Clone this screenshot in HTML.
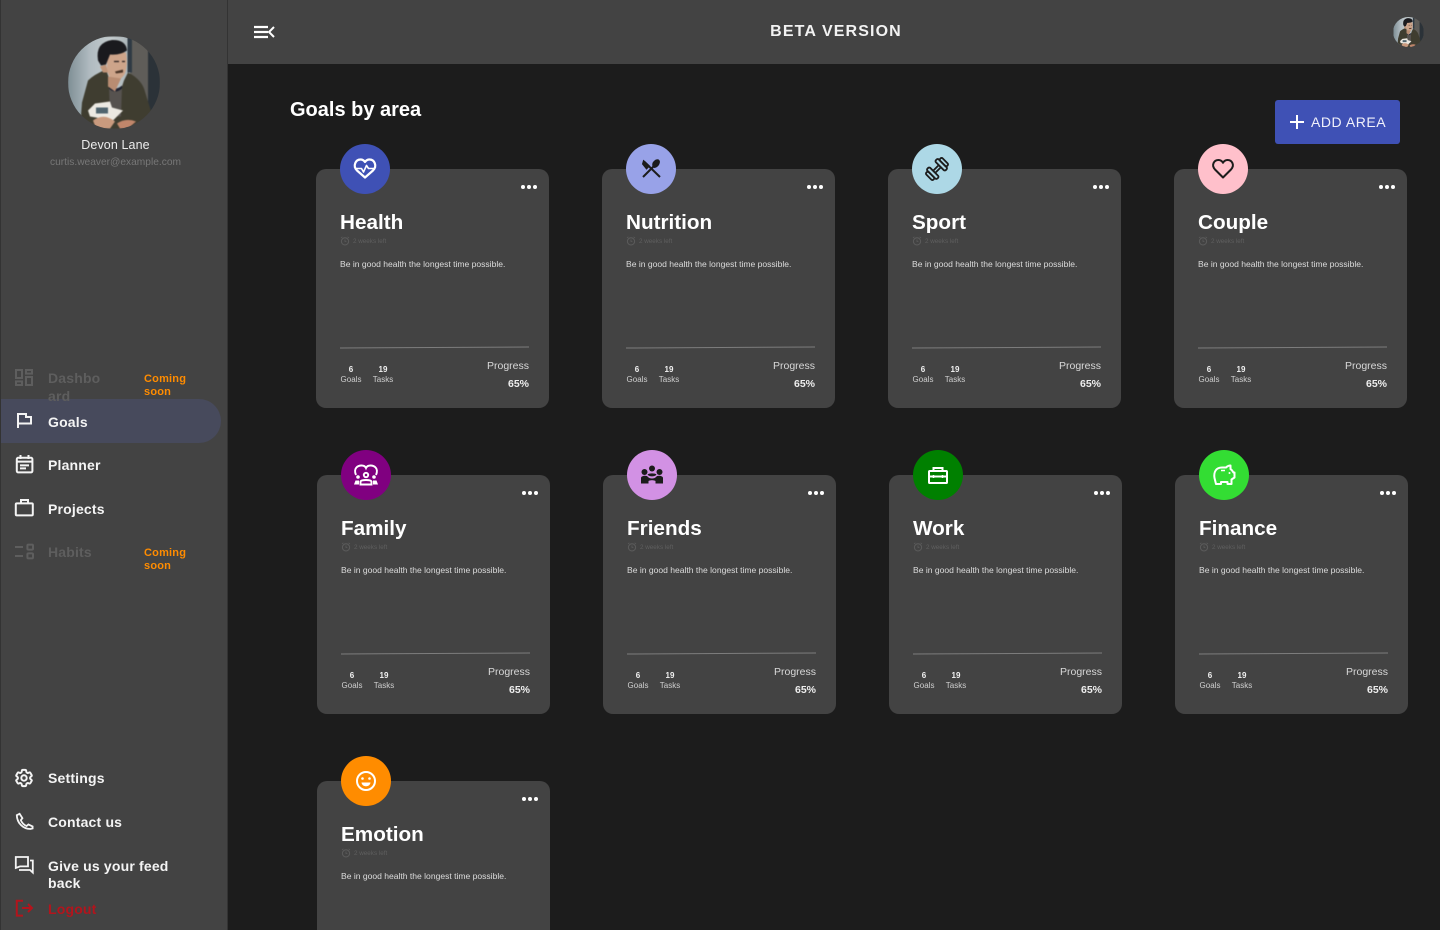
<!DOCTYPE html>
<html lang="en">
<head>
<meta charset="utf-8">
<title>Goals by area</title>
<style>
html,body{margin:0;padding:0;width:1440px;height:930px;overflow:hidden;background:#1c1c1c;font-family:"Liberation Sans",sans-serif;color:#fff}
*{box-sizing:border-box}
#root{position:relative;width:1440px;height:930px;overflow:hidden;background:#1c1c1c}
.a{position:absolute;white-space:nowrap}
#side{position:absolute;left:0;top:0;width:228px;height:930px;background:#434343;border-left:1px solid #333;border-right:1px solid #333;overflow:hidden}
#side svg.ov{position:absolute;left:-1px;top:0}
#top{position:absolute;left:228px;top:0;width:1212px;height:64px;background:#434343}
.n{position:absolute;left:47px;font-size:14px;font-weight:bold;line-height:17px;letter-spacing:.18px;color:#f4f4f4;white-space:nowrap}
.off{color:#5e5e5e}
.cs{position:absolute;left:143px;font-size:11px;font-weight:bold;line-height:13.5px;color:#ff8c00;letter-spacing:.2px}
.c{position:absolute;width:233px;height:239px;background:#434343;border-radius:10px}
.i{position:absolute;left:24px;top:-25px;width:50px;height:50px;border-radius:50%}
.i svg{display:block}
.d{position:absolute;top:15.7px;width:4.6px;height:4.6px;border-radius:50%;background:#fff}
.t{position:absolute;left:24px;top:41.5px;font-size:20.7px;font-weight:bold;line-height:24px;white-space:nowrap;color:#fff}
.ck{position:absolute;left:24px;top:67px}
.w{position:absolute;left:37px;top:69px;font-size:6.3px;line-height:8px;color:#5f5f5f;white-space:nowrap}
.p{position:absolute;left:24px;top:90px;font-size:8.56px;line-height:11px;color:#dcdcdc;white-space:nowrap}
.l{position:absolute;left:24px;top:177.5px;width:189px;height:1px;background:#7d7d7d;transform:rotate(-.3deg)}
.s{position:absolute;top:196px;width:40px;text-align:center;font-size:8px;line-height:10px;font-weight:bold;color:#f2f2f2}
.s2{position:absolute;top:206px;width:40px;text-align:center;font-size:8px;line-height:10px;color:#cfcfcf}
.pr{position:absolute;right:20px;top:190px;font-size:10.5px;line-height:14px;color:#d8d8d8}
.pc{position:absolute;right:20px;top:208px;font-size:10.5px;line-height:14px;font-weight:bold;color:#eee}
.blur{filter:blur(.5px)}
</style>
</head>
<body>
<div id="root">
<svg width="0" height="0" style="position:absolute">
<defs>
<linearGradient id="g" x1="0" x2="1"><stop offset="0" stop-color="#7f8f96"/><stop offset=".35" stop-color="#b0bbc0"/><stop offset=".7" stop-color="#c4ccce"/><stop offset="1" stop-color="#a8b2b6"/></linearGradient>
<symbol id="av" viewBox="0 0 92 92">
<rect width="62" height="92" fill="url(#g)"/>
<rect x="62" width="30" height="92" fill="#5f5d59"/>
<rect x="59.5" width="4.5" height="36" fill="#2f3a44"/>
<rect x="80" width="12" height="92" fill="#2b3238"/>
<path d="M12 92 L14 66 L20 44 Q26 38 38 33 L44 50 L50 62 L56 44 L60 36 Q72 42 76 52 L84 78 L80 92Z" fill="#3f3d30"/>
<path d="M41 50 Q47 56 54 50 L53 80 L42 80Z" fill="#56524f"/>
<path d="M41 49 Q47 55 54 49 L54 52 Q47 58 41 52Z" fill="#1f2230"/>
<path d="M39 16 L58 16 Q60 28 57 37 Q53 44 47 44 Q40 42 39 32Z" fill="#cda48a"/>
<path d="M40 40 L40 50 L47 55 L53 42Z" fill="#b88c72"/>
<path d="M32 30 L38 28 L40 36 L35 36Z" fill="#c09478"/>
<path d="M30 24 Q27 6 44 3.5 Q58 3 59 14 Q52 19 42 18 L38 28 L33 29Z" fill="#1a1a1e"/>
<path d="M47 35 L55 33 L55 36 L48 37Z" fill="#4b3528"/>
<path d="M46 25H51M54 25H57" stroke="#2a2020" stroke-width="1.2"/>
<path d="M20 74 L27 67 L42 65 L44 71 L55 74 L44 85 L28 81 L22 80Z" fill="#ece9e2"/>
<rect x="28" y="71" width="12" height="6" fill="#50646e"/>
<path d="M25 84 Q36 76 47 85 L42 92 L28 92Z" fill="#c99a7e"/>
<path d="M49 87 Q58 81 68 85 L60 92 L52 92Z" fill="#c0866b"/>
</symbol>
<symbol id="clock" viewBox="0 0 10 10"><circle cx="5" cy="5.4" r="3.6" fill="none" stroke="#5c5c5c" stroke-width="1"/><path d="M5 3.5V5.5H6.4M1 2L2.4 .8M9 2L7.6 .8" fill="none" stroke="#5c5c5c" stroke-width=".8"/></symbol>
</defs>
</svg>

<div id="side">
<svg class="ov" width="228" height="930" viewBox="0 0 228 930" fill="none">
<path d="M0 399H199a22 22 0 0 1 0 44H0Z" fill="#474a5c"/>
<g stroke="#5e5e5e" stroke-width="2">
<rect x="16" y="370" width="6" height="8"/><rect x="26" y="370" width="6" height="3.6"/><rect x="16" y="381.4" width="6" height="3.6"/><rect x="26" y="377" width="6" height="8"/>
<path d="M15 547H23M15 556H23"/><rect x="27.4" y="544.6" width="5.6" height="5" rx="1"/><rect x="27.4" y="553.4" width="5.6" height="5" rx="1"/>
</g>
<g stroke="#f4f4f4" stroke-width="2">
<path d="M18 428V414H26V417H31V423.5H18"/>
<rect x="16.8" y="457.8" width="15.6" height="14.6" rx="1.4"/><path d="M20.5 455V459M28.5 455V459M17 461.6H32M20 465.4H29M20 468.4H26"/>
<rect x="15.8" y="503.4" width="17" height="12" rx="1"/><path d="M21 503V500H28V503"/>
<g transform="translate(13.2 767.2) scale(.9)" stroke-width="2.2"><path d="M9.594 3.94c.09-.542.56-.94 1.11-.94h2.593c.55 0 1.02.398 1.11.94l.213 1.281c.063.374.313.686.645.87.074.04.147.083.22.127.324.196.72.257 1.075.124l1.217-.456a1.125 1.125 0 011.37.49l1.296 2.247a1.125 1.125 0 01-.26 1.431l-1.003.827c-.293.24-.438.613-.431.992a6.759 6.759 0 010 .255c-.007.378.138.75.43.99l1.005.828c.424.35.534.954.26 1.43l-1.298 2.247a1.125 1.125 0 01-1.369.491l-1.217-.456c-.355-.133-.75-.072-1.076.124a6.57 6.57 0 01-.22.128c-.331.183-.581.495-.644.869l-.213 1.28c-.09.543-.56.941-1.11.941h-2.594c-.55 0-1.02-.398-1.11-.94l-.213-1.281c-.062-.374-.312-.686-.644-.87a6.52 6.52 0 01-.22-.127c-.325-.196-.72-.257-1.076-.124l-1.217.456a1.125 1.125 0 01-1.369-.49l-1.297-2.247a1.125 1.125 0 01.26-1.431l1.004-.827c.292-.24.437-.613.43-.992a6.932 6.932 0 010-.255c.007-.378-.138-.75-.43-.99l-1.004-.828a1.125 1.125 0 01-.26-1.43l1.297-2.247a1.125 1.125 0 011.37-.491l1.216.456c.356.133.751.072 1.076-.124.072-.044.146-.087.22-.128.332-.183.582-.495.644-.869l.214-1.281z"/><circle cx="12" cy="12" r="3"/></g>
<path d="M16.8 815.2L19.6 813.8L22.4 818.2L20.8 820.2C22 823 24 825 26.6 826L28.4 824.4L32.6 826.4V828.4L30.4 829C23 829 17 823 16.8 815.2Z" stroke-width="1.8"/>
<path d="M15.8 857H28V866.4H20L15.8 868Z" stroke-width="1.8"/><path d="M19 870H30L32.8 872.6V860.5H30" stroke-width="1.8"/>
</g>
<g stroke="#b3141c" stroke-width="2"><path d="M23 900.8H16.8V915.6H23M22 908H32M28 904L32 908L28 912"/></g>
</svg>
<div class="a" style="left:66.5px;top:35.5px;width:92px;height:93px;border-radius:50%;overflow:hidden"><svg class="blur" width="92" height="93" style="display:block"><use href="#av" width="92" height="93"/></svg></div>
<div class="a" style="left:0;width:229px;text-align:center;top:137px;font-size:12.5px;line-height:16px;color:#ececec;letter-spacing:.1px">Devon Lane</div>
<div class="a" style="left:0;width:229px;text-align:center;top:155.5px;font-size:10.2px;line-height:14px;color:#777">curtis.weaver@example.com</div>
<div class="n off" style="top:370px;white-space:normal;width:60px;line-height:17.5px;overflow:hidden;height:34px;word-break:break-all">Dashboard</div>
<div class="cs" style="top:372.5px">Coming<br>soon</div>
<div class="n" style="top:413.5px">Goals</div>
<div class="n" style="top:457px">Planner</div>
<div class="n" style="top:500.5px">Projects</div>
<div class="n off" style="top:544px">Habits</div>
<div class="cs" style="top:546.5px">Coming<br>soon</div>
<div class="n" style="top:770px">Settings</div>
<div class="n" style="top:813.5px">Contact us</div>
<div class="n" style="top:857.5px">Give us your feed<br>back</div>
<div class="n" style="top:900.5px;color:#b3141c">Logout</div>
</div>

<div id="top">
<svg class="a" style="left:0;top:0" width="60" height="64" fill="none" stroke="#fff" stroke-width="2.2"><path d="M26 27H40M26 32H40M26 37H40"/><path d="M46 27L41 32L46 37" stroke-width="2"/></svg>
<div class="a" style="left:0;width:1216px;text-align:center;top:22px;font-size:16px;line-height:20px;font-weight:bold;letter-spacing:1.12px;color:#f2f2f2">BETA VERSION</div>
<div class="a" style="left:1164.5px;top:17px;width:31px;height:30px;border-radius:50%;overflow:hidden"><svg width="31" height="30" style="display:block"><use href="#av" width="31" height="30"/></svg></div>
</div>

<div class="a" style="left:290px;top:97.5px;font-size:20px;line-height:24px;font-weight:bold;color:#fff">Goals by area</div>
<div class="a" style="left:1275px;top:100px;width:125px;height:44px;background:#3f51b5;border-radius:3px">
<svg class="a" style="left:15px;top:15px" width="14" height="14" fill="none" stroke="#fff" stroke-width="2"><path d="M7 0V14M0 7H14"/></svg>
<div class="a" style="left:36px;top:13px;font-size:14px;line-height:18px;letter-spacing:.55px;color:#f1f1fb">ADD AREA</div>
</div>

<!-- Health -->
<div class="c" style="left:316px;top:169px">
<div class="i" style="background:#3f51b5"><svg width="50" height="50" fill="none" stroke="#fff" stroke-width="2.2" stroke-linejoin="round"><path d="M25 33.5L17 26.5C12.5 22 15.5 15.5 20.5 15.5C22.5 15.5 24 16.5 25 18C26 16.5 27.5 15.5 29.5 15.5C34.5 15.5 37.5 22 33 26.5Z"/><path d="M15.5 24.5H21.5L23.5 28L26.5 21.5L28.5 24.5H34.5" stroke-width="1.6"/></svg></div>
<div class="d" style="left:204.5px"></div><div class="d" style="left:210.5px"></div><div class="d" style="left:216.5px"></div>
<div class="t">Health</div>
<svg class="ck" width="10" height="10"><use href="#clock"/></svg><div class="w">2 weeks left</div>
<div class="p">Be in good health the longest time possible.</div>
<div class="l"></div>
<div class="s" style="left:15px">6</div><div class="s2" style="left:15px">Goals</div>
<div class="s" style="left:47px">19</div><div class="s2" style="left:47px">Tasks</div>
<div class="pr">Progress</div><div class="pc">65%</div>
</div>

<!-- Nutrition -->
<div class="c" style="left:602px;top:169px">
<div class="i" style="background:#98a2e8"><svg width="50" height="50" fill="none" stroke="#1c1c1c" stroke-width="2"><path d="M34 33L18 17.5"/><path d="M17.5 16.5L23.5 22L20.5 25L16.5 20Z" fill="#1c1c1c" stroke-width="1"/><path d="M17 33L28 22"/><path d="M27 22.5C25.5 18.5 30 15 32.5 16C34.5 17.5 33 22.5 28.5 23.5Z" fill="#1c1c1c" stroke-width="1"/></svg></div>
<div class="d" style="left:204.5px"></div><div class="d" style="left:210.5px"></div><div class="d" style="left:216.5px"></div>
<div class="t">Nutrition</div>
<svg class="ck" width="10" height="10"><use href="#clock"/></svg><div class="w">2 weeks left</div>
<div class="p">Be in good health the longest time possible.</div>
<div class="l"></div>
<div class="s" style="left:15px">6</div><div class="s2" style="left:15px">Goals</div>
<div class="s" style="left:47px">19</div><div class="s2" style="left:47px">Tasks</div>
<div class="pr">Progress</div><div class="pc">65%</div>
</div>

<!-- Sport -->
<div class="c" style="left:888px;top:169px">
<div class="i" style="background:#add8e6"><svg width="50" height="50" fill="none" stroke="#1c1c1c" stroke-width="1.8"><g transform="rotate(-45 25 25)"><rect x="13.5" y="20" width="3.5" height="10" rx="1.5"/><rect x="17" y="18" width="4" height="14" rx="1.5"/><rect x="29" y="18" width="4" height="14" rx="1.5"/><rect x="33" y="20" width="3.5" height="10" rx="1.5"/><path d="M21 23.5H29M21 26.5H29"/></g></svg></div>
<div class="d" style="left:204.5px"></div><div class="d" style="left:210.5px"></div><div class="d" style="left:216.5px"></div>
<div class="t">Sport</div>
<svg class="ck" width="10" height="10"><use href="#clock"/></svg><div class="w">2 weeks left</div>
<div class="p">Be in good health the longest time possible.</div>
<div class="l"></div>
<div class="s" style="left:15px">6</div><div class="s2" style="left:15px">Goals</div>
<div class="s" style="left:47px">19</div><div class="s2" style="left:47px">Tasks</div>
<div class="pr">Progress</div><div class="pc">65%</div>
</div>

<!-- Couple -->
<div class="c" style="left:1174px;top:169px">
<div class="i" style="background:#ffc0cb"><svg width="50" height="50" fill="none" stroke="#1c1c1c" stroke-width="2" stroke-linejoin="round"><path d="M25 33.5L17 25.5C13 21 16 16 20.5 16C22.5 16 24 17 25 18.8C26 17 27.5 16 29.5 16C34 16 37 21 33 25.5Z"/></svg></div>
<div class="d" style="left:204.5px"></div><div class="d" style="left:210.5px"></div><div class="d" style="left:216.5px"></div>
<div class="t">Couple</div>
<svg class="ck" width="10" height="10"><use href="#clock"/></svg><div class="w">2 weeks left</div>
<div class="p">Be in good health the longest time possible.</div>
<div class="l"></div>
<div class="s" style="left:15px">6</div><div class="s2" style="left:15px">Goals</div>
<div class="s" style="left:47px">19</div><div class="s2" style="left:47px">Tasks</div>
<div class="pr">Progress</div><div class="pc">65%</div>
</div>

<!-- Family -->
<div class="c" style="left:317px;top:475px">
<div class="i" style="background:#800080"><svg width="50" height="50" fill="none" stroke="#fff" stroke-width="1.9"><path d="M15 25C12 18 17 15.5 20.5 15.5C23 15.5 24.5 16.8 25 18C25.5 16.8 27 15.5 29.5 15.5C33 15.5 38 18 35 25"/><circle cx="25" cy="25" r="2.2"/><circle cx="17" cy="27" r="1.8" fill="#fff" stroke="none"/><circle cx="33" cy="27" r="1.8" fill="#fff" stroke="none"/><path d="M19.5 34.5V31.5C20.5 29.5 29.5 29.5 30.5 31.5V34.5Z"/><path d="M13 34.5L14.5 30.5H18V34.5ZM37 34.5L35.5 30.5H32V34.5Z" fill="#fff" stroke="none"/></svg></div>
<div class="d" style="left:204.5px"></div><div class="d" style="left:210.5px"></div><div class="d" style="left:216.5px"></div>
<div class="t">Family</div>
<svg class="ck" width="10" height="10"><use href="#clock"/></svg><div class="w">2 weeks left</div>
<div class="p">Be in good health the longest time possible.</div>
<div class="l"></div>
<div class="s" style="left:15px">6</div><div class="s2" style="left:15px">Goals</div>
<div class="s" style="left:47px">19</div><div class="s2" style="left:47px">Tasks</div>
<div class="pr">Progress</div><div class="pc">65%</div>
</div>

<!-- Friends -->
<div class="c" style="left:603px;top:475px">
<div class="i" style="background:#d291e4"><svg width="50" height="50" fill="#1c1c1c"><circle cx="25" cy="18.5" r="3"/><circle cx="17.5" cy="22" r="3"/><circle cx="32.5" cy="22" r="3"/><path d="M14 33.5V28C14 25.5 20 25 21 27C22.5 29 27.5 29 29 27C30 25 36 25.5 36 28V33.5H28.5V31C27 30 23 30 21.5 31V33.5Z"/><path d="M20.5 24.5C22 23 28 23 29.5 24.5C28 27 22 27 20.5 24.5Z"/></svg></div>
<div class="d" style="left:204.5px"></div><div class="d" style="left:210.5px"></div><div class="d" style="left:216.5px"></div>
<div class="t">Friends</div>
<svg class="ck" width="10" height="10"><use href="#clock"/></svg><div class="w">2 weeks left</div>
<div class="p">Be in good health the longest time possible.</div>
<div class="l"></div>
<div class="s" style="left:15px">6</div><div class="s2" style="left:15px">Goals</div>
<div class="s" style="left:47px">19</div><div class="s2" style="left:47px">Tasks</div>
<div class="pr">Progress</div><div class="pc">65%</div>
</div>

<!-- Work -->
<div class="c" style="left:889px;top:475px">
<div class="i" style="background:#008000"><svg width="50" height="50" fill="none" stroke="#fff" stroke-width="2"><rect x="16" y="21" width="18" height="12" rx=".8"/><path d="M20.5 21V18H29.5V21M16 26.5H34"/><path d="M20.5 25V28M29.5 25V28" stroke-width="1.5"/></svg></div>
<div class="d" style="left:204.5px"></div><div class="d" style="left:210.5px"></div><div class="d" style="left:216.5px"></div>
<div class="t">Work</div>
<svg class="ck" width="10" height="10"><use href="#clock"/></svg><div class="w">2 weeks left</div>
<div class="p">Be in good health the longest time possible.</div>
<div class="l"></div>
<div class="s" style="left:15px">6</div><div class="s2" style="left:15px">Goals</div>
<div class="s" style="left:47px">19</div><div class="s2" style="left:47px">Tasks</div>
<div class="pr">Progress</div><div class="pc">65%</div>
</div>

<!-- Finance -->
<div class="c" style="left:1175px;top:475px">
<div class="i" style="background:#33dd33"><svg width="50" height="50" fill="none" stroke="#fff" stroke-width="2" stroke-linejoin="round"><path d="M17 34L15.5 28C14.5 22 17 17.5 23 17.5H27C28 16.5 30 15.5 31.5 15.5V19C33 20 33.8 21.5 34.5 22.5H35.5V27.5L32.5 29.5V34H28.5V32H22V34Z"/><path d="M22 20.5H26" stroke-width="1.5"/><circle cx="30.5" cy="23" r="1" fill="#fff" stroke="none"/></svg></div>
<div class="d" style="left:204.5px"></div><div class="d" style="left:210.5px"></div><div class="d" style="left:216.5px"></div>
<div class="t">Finance</div>
<svg class="ck" width="10" height="10"><use href="#clock"/></svg><div class="w">2 weeks left</div>
<div class="p">Be in good health the longest time possible.</div>
<div class="l"></div>
<div class="s" style="left:15px">6</div><div class="s2" style="left:15px">Goals</div>
<div class="s" style="left:47px">19</div><div class="s2" style="left:47px">Tasks</div>
<div class="pr">Progress</div><div class="pc">65%</div>
</div>

<!-- Emotion -->
<div class="c" style="left:317px;top:781px;height:149px;border-radius:10px 10px 0 0">
<div class="i" style="background:#ff8c00"><svg width="50" height="50" fill="none" stroke="#fff" stroke-width="2"><circle cx="25" cy="25" r="9"/><circle cx="21.5" cy="22.5" r="1.3" fill="#fff" stroke="none"/><circle cx="28.5" cy="22.5" r="1.3" fill="#fff" stroke="none"/><path d="M20.5 26.5H29.5C29 31.5 21 31.5 20.5 26.5Z" fill="#fff" stroke="none"/></svg></div>
<div class="d" style="left:204.5px"></div><div class="d" style="left:210.5px"></div><div class="d" style="left:216.5px"></div>
<div class="t">Emotion</div>
<svg class="ck" width="10" height="10"><use href="#clock"/></svg><div class="w">2 weeks left</div>
<div class="p">Be in good health the longest time possible.</div>
</div>
</div>
</body>
</html>
